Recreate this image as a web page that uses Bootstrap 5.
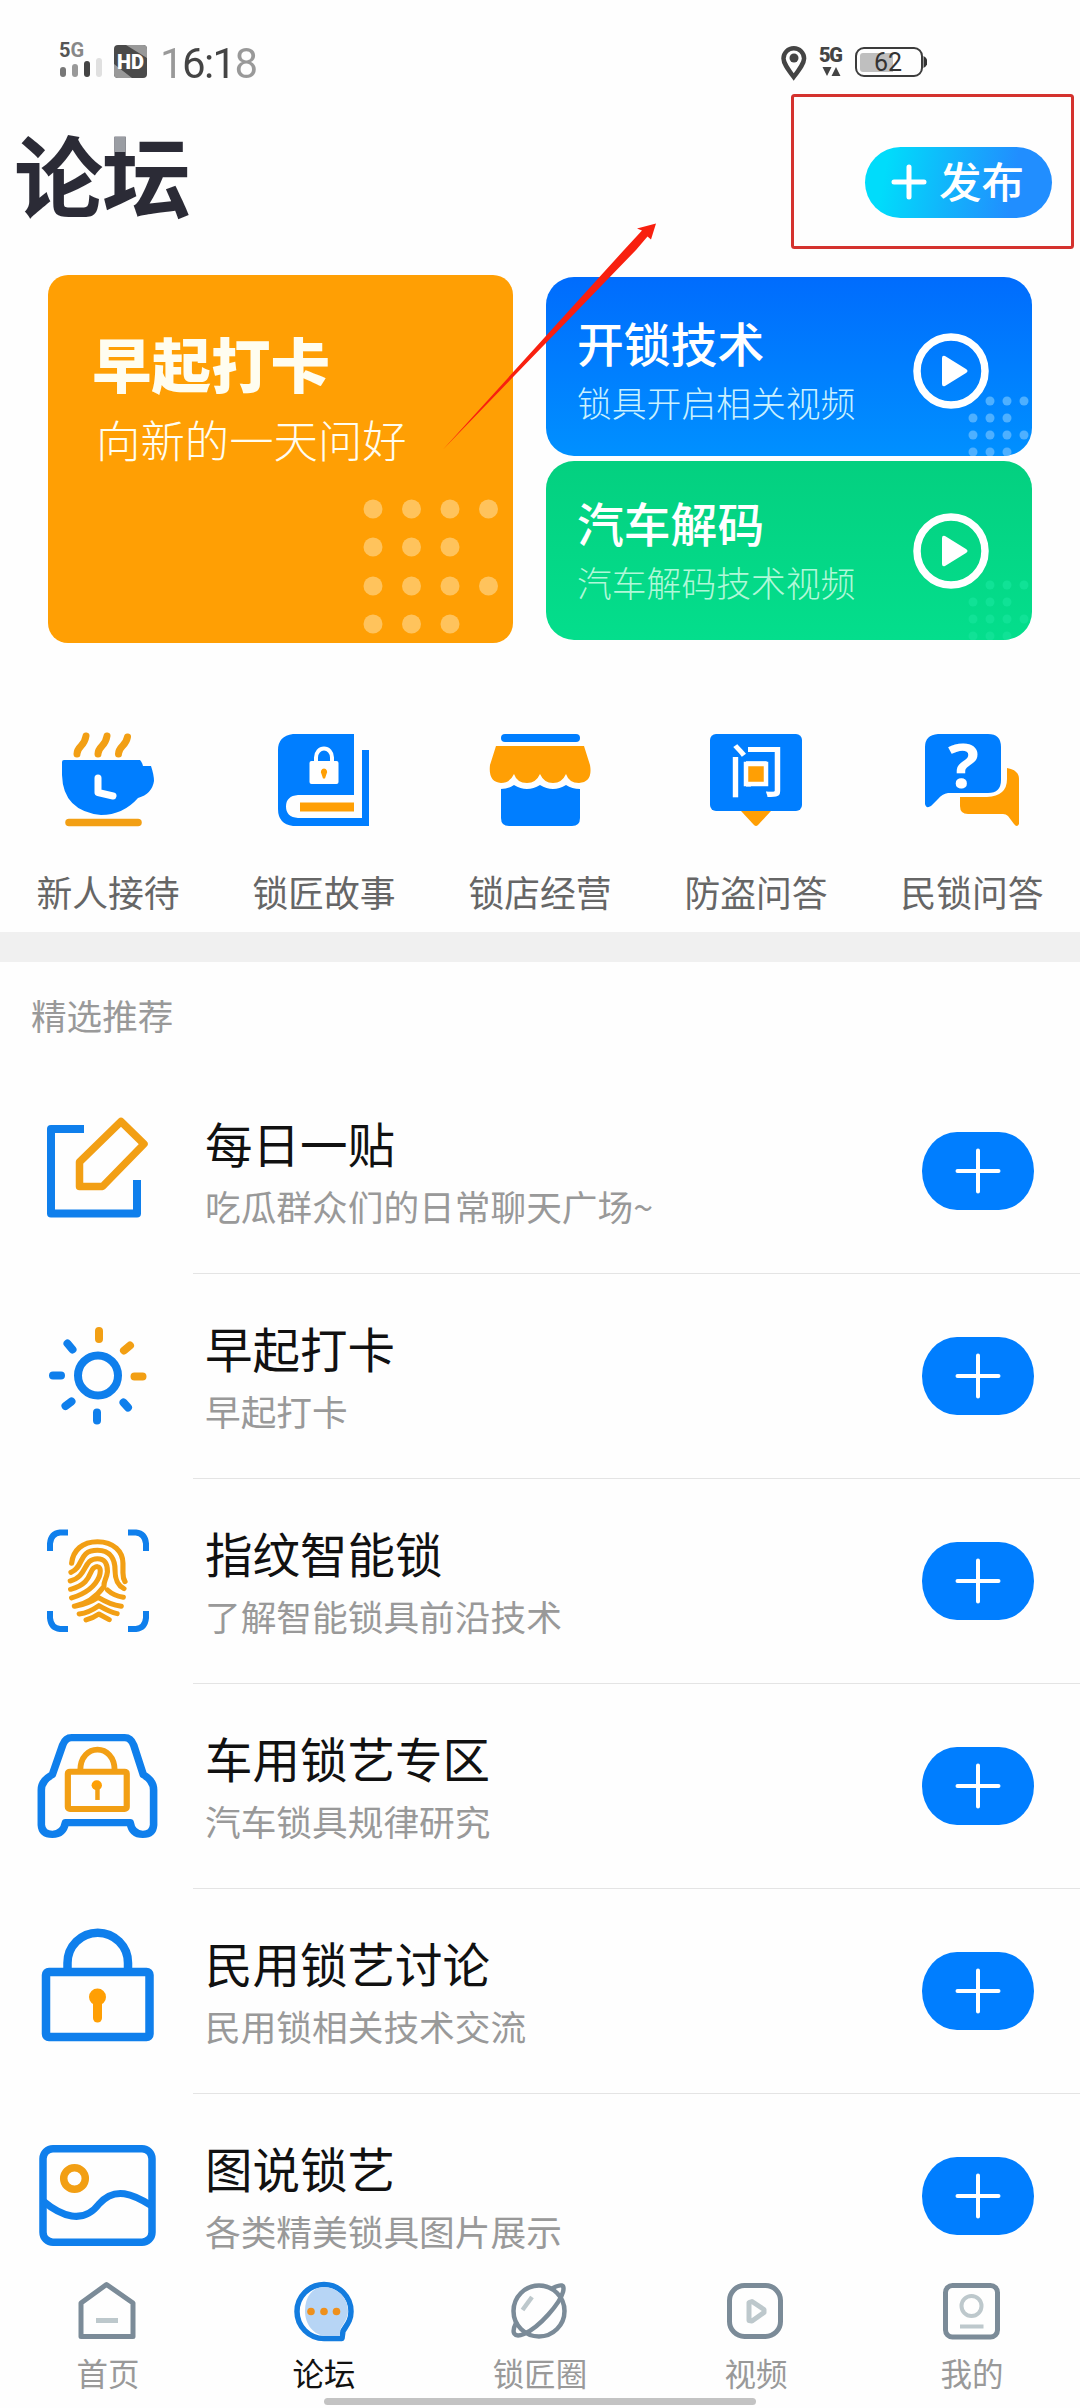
<!DOCTYPE html>
<html lang="zh-CN">
<head>
<meta charset="utf-8">
<meta name="viewport" content="width=device-width, initial-scale=1">
<title>论坛</title>
<link href="https://cdn.jsdelivr.net/npm/bootstrap@5.3.0/dist/css/bootstrap.min.css" rel="stylesheet">
<style>
  :root { --brand: #007eff; --sun: #ff9f04; }
  body { background: #fefefe; font-family: "Noto Sans CJK SC", "Noto Sans", sans-serif; color: #111; }
  svg { display: block; flex: none; }
  .screen { width: 1080px; height: 2408px; }
  .statusbar { height: 124px; padding: 0 153px 0 52px; font-family: Roboto, sans-serif; }
  .clock { font-size: 42px; line-height: 50px; letter-spacing: -1.6px; margin-left: 8px; padding: 3px 3px 0 0;
    background: linear-gradient(90deg, #999 0 20px, #444 20px 68px, #999 74px); -webkit-background-clip: text; background-clip: text; color: transparent; }
  .topbar { height: 115px; padding: 0 28px 0 14px; }
  .topbar h1 { font-size: 89px; line-height: 110px; font-weight: 700; letter-spacing: -1px; padding-bottom: 18px;
    background: linear-gradient(#9a9da3, #9a9da3) 100px 0/14px 34px no-repeat, #2b2b36; -webkit-background-clip: text; background-clip: text; color: transparent; }
  .publish { width: 187px; height: 71px; font-size: 42.5px; line-height: 60px; font-weight: 500; color: #fff; padding: 0 0 0 26px; margin-top: 1px;
    background: linear-gradient(100deg, #00dcfb 12%, #12b4fb 45%, #218eff 78%); }
  .promo { margin: 36px 48px 0; height: 368px; }
  .promo-day { width: 465px; border-radius: 20px; background: var(--sun); padding: 51px 0 0 44px; color: #fffdf0; }
  .promo-day h2 { font-size: 59.5px; line-height: 72px; font-weight: 900; }
  .promo-day p { font-size: 44.4px; line-height: 60px; font-weight: 300; padding: 7px 0 0 4px; }
  .promo-side { width: 486px; padding: 2px 0 3px; }
  .promo-video { height: 179px; border-radius: 28px; padding: 0 43px 0 31px; color: #fff; }
  .promo-video h2 { font-size: 46.8px; line-height: 60px; font-weight: 500; padding-top: 6px; }
  .promo-video p { font-size: 34.8px; line-height: 50px; font-weight: 300; color: #c9f1ff; margin-top: 5px; }
  .promo-open { background: linear-gradient(#006cfd, #0090ff); }
  .promo-car { background: linear-gradient(#04d080, #04de8c); }
  .promo-car h2 { padding: 0; }
  .promo-car p { color: #b0f8d8; padding-bottom: 3px; }
  .shortcuts { height: 289px; padding-top: 77px; }
  .shortcuts span { font-size: 35.8px; line-height: 50px; color: #666; margin-top: 25px; }
  .divide { height: 30px; background: #f0f0f0; }
  .section-name { height: 107px; padding: 0 0 2px 31px; font-size: 35.6px; color: #999; }
  .boards { height: 1187px; }
  .board { height: 205px; }
  .board-main { border-bottom: 1px solid #e4e4e4; padding: 0 46px 0 12px; }
  .board h3 { font-size: 47.5px; line-height: 60px; font-weight: 400; margin: 2px 0 8px; }
  .board p { font-size: 35.7px; line-height: 50px; color: #999; }
  .follow { width: 112px; height: 78px; border-radius: 35px / 39px; background: var(--brand); }
  .tabs { height: 152px; padding-top: 18px; background: #fefefe; }
  .tabs a { width: 216px; font-size: 31.5px; line-height: 44px; color: #999; }
  .tabs a.active { color: #111; }
  .tabs span { margin-top: 2px; }
  .homebar { width: 432px; height: 7px; left: 324px; bottom: 3px; background: #c3c3c3; }
  .fo { fill: var(--sun); } .fb { fill: var(--brand); } .fw { fill: #fff; }
  .so { stroke: #f29f14; fill: none; } .sb { stroke: #0f7fec; fill: none; }
  .sw { stroke: #fff; fill: none; } .sg { stroke: #7b8b98; fill: none; } .sl { stroke: #bdc8cc; fill: none; }
  .rd { stroke-linecap: round; stroke-linejoin: round; }
</style>
<script src="https://cdn.jsdelivr.net/npm/bootstrap@5.3.0/dist/js/bootstrap.bundle.min.js"></script>
</head>
<body>
<div class="screen position-relative overflow-hidden d-flex flex-column">

  <div class="statusbar d-flex align-items-center justify-content-between">
    <div class="d-flex align-items-center">
      <svg width="100" height="64" viewBox="52 29 100 64">
        <text x="59" y="56" font-size="20" font-weight="700" fill="#555">5<tspan fill="#888">G</tspan></text>
        <g stroke-width="6" stroke-linecap="round"><path d="M63 69v4" stroke="#777"/><path d="M75 66v7" stroke="#999"/><path d="M87 63v10" stroke="#444"/><path d="M99 60v13" stroke="#e0e0e0"/></g>
        <rect x="114" y="44" width="33" height="33" rx="4" fill="#4a4a4a"/>
        <path d="M126 44h17q4 0 4 4v9zM114 63l18 14h-14q-4 0-4-4z" fill="#999"/>
        <text x="117" y="68" font-size="20" font-weight="900" fill="#fff" textLength="27" lengthAdjust="spacingAndGlyphs">HD</text>
      </svg>
      <span class="clock">16:18</span>
    </div>
    <svg width="147" height="40" viewBox="780 41 147 40">
      <path d="M793.700 76C787 67 783.500 62 783.500 57.500a10.300 10.300 0 0 1 20.600 0C804 62 800.500 67 793.700 76z" fill="none" stroke="#444" stroke-width="4.500"/>
      <circle cx="794" cy="57" r="4.500" fill="#444"/>
      <text x="819" y="61" font-size="20" font-weight="900" fill="#444" textLength="24">5G</text>
      <path d="M822.500 66h9l-4.500 9zM831.500 75h9l-4.500-9z" fill="#444"/>
      <rect x="856" y="47" width="66" height="28" rx="8" fill="none" stroke="#3c3c3c" stroke-width="2"/>
      <path d="M863 52h30v19h-30q-3 0-3-3v-13q0-3 3-3z" fill="#bfbfbf"/>
      <path d="M923.500 55q4 2 4 6t-4 6z" fill="#333"/>
      <text x="874" y="70" font-size="25" fill="#333">62</text>
    </svg>
  </div>

  <header class="topbar d-flex align-items-center justify-content-between">
    <h1 class="m-0">论坛</h1>
    <button type="button" class="publish btn rounded-pill border-0 d-flex align-items-center">
      <svg width="36" height="36" viewBox="0 0 36 36"><path class="sw" stroke-width="5" stroke-linecap="round" d="M18 3v30M3 18h30"/></svg>
      <span class="ms-2 ps-1 pb-1">发布</span>
    </button>
  </header>

  <section class="promo d-flex justify-content-between">
    <div class="promo-day position-relative">
      <h2 class="m-0">早起打卡</h2>
      <p class="m-0 mt-1">向新的一天问好</p>
      <svg class="position-absolute bottom-0 end-0" width="153" height="150" viewBox="360 493 153 150">
        <g fill="#ffc35c"><circle cx="373" cy="509" r="9.500"/><circle cx="411.500" cy="509" r="9.500"/><circle cx="450" cy="509" r="9.500"/><circle cx="488.500" cy="509" r="9.500"/><circle cx="373" cy="547" r="9.500"/><circle cx="411.500" cy="547" r="9.500"/><circle cx="450" cy="547" r="9.500"/><circle cx="373" cy="586" r="9.500"/><circle cx="411.500" cy="586" r="9.500"/><circle cx="450" cy="586" r="9.500"/><circle cx="488.500" cy="586" r="9.500"/><circle cx="373" cy="624" r="9.500"/><circle cx="411.500" cy="624" r="9.500"/><circle cx="450" cy="624" r="9.500"/></g>
      </svg>
    </div>
    <div class="promo-side d-flex flex-column justify-content-between">
      <div class="promo-video promo-open position-relative overflow-hidden d-flex align-items-center justify-content-between">
        <div><h2 class="m-0">开锁技术</h2><p class="mb-0">锁具开启相关视频</p></div>
        <svg width="76" height="76" viewBox="0 0 76 76" class="mt-2"><circle class="sw" cx="38" cy="38" r="34" stroke-width="7.500"/><path class="fw" d="M29 25q0-3 3-2l21 13q3 2 0 4L32 53q-3 1-3-2z"/></svg>
        <svg class="position-absolute bottom-0 end-0" width="70" height="65" viewBox="962 391 70 65"><g fill="#4eb0ff"><circle cx="990" cy="401" r="4.500"/><circle cx="1007" cy="401" r="4.500"/><circle cx="1024" cy="401" r="4.500"/><circle cx="973" cy="418" r="4.500"/><circle cx="990" cy="418" r="4.500"/><circle cx="1007" cy="418" r="4.500"/><circle cx="973" cy="435" r="4.500"/><circle cx="990" cy="435" r="4.500"/><circle cx="1007" cy="435" r="4.500"/><circle cx="1024" cy="435" r="4.500"/><circle cx="973" cy="452" r="4.500"/><circle cx="990" cy="452" r="4.500"/><circle cx="1007" cy="452" r="4.500"/></g></svg>
      </div>
      <div class="promo-video promo-car position-relative overflow-hidden d-flex align-items-center justify-content-between">
        <div><h2 class="m-0">汽车解码</h2><p class="mb-0">汽车解码技术视频</p></div>
        <svg width="76" height="76" viewBox="0 0 76 76"><circle class="sw" cx="38" cy="38" r="34" stroke-width="7.500"/><path class="fw" d="M29 25q0-3 3-2l21 13q3 2 0 4L32 53q-3 1-3-2z"/></svg>
        <svg class="position-absolute bottom-0 end-0" width="70" height="65" viewBox="962 391 70 65"><g fill="#10e296"><circle cx="990" cy="401" r="4.500"/><circle cx="1007" cy="401" r="4.500"/><circle cx="1024" cy="401" r="4.500"/><circle cx="973" cy="418" r="4.500"/><circle cx="990" cy="418" r="4.500"/><circle cx="1007" cy="418" r="4.500"/><circle cx="973" cy="435" r="4.500"/><circle cx="990" cy="435" r="4.500"/><circle cx="1007" cy="435" r="4.500"/><circle cx="1024" cy="435" r="4.500"/><circle cx="973" cy="452" r="4.500"/><circle cx="990" cy="452" r="4.500"/><circle cx="1007" cy="452" r="4.500"/></g></svg>
      </div>
    </div>
  </section>

  <section class="shortcuts row g-0 row-cols-5">
    <div class="col d-flex flex-column align-items-center">
      <svg width="120" height="122" viewBox="48 720 120 122">
        <path class="so rd" stroke-width="7" d="M77 754q0-4 4-8t5-10M98 754q0-4 4-8t5-10M118.500 754q0-4 4-8t5-9"/>
        <path class="fb" d="M64 760h76q2 2 3 6h8q3 9 3 15-2 13-16 17-15 17-37 17-38-4-39-40v-13q0-2 2-2z"/>
        <path class="sw rd" stroke-width="7" d="M98 778v14.500l15 3.500"/>
        <path class="so rd" stroke-width="7.500" d="M69 822.500h69"/>
      </svg><span class="mt-4">新人接待</span>
    </div>
    <div class="col d-flex flex-column align-items-center">
      <svg width="120" height="122" viewBox="264 720 120 122">
        <path class="fb" d="M293 734h61v61h-56q-12 1-12 11.500T298 818h64v-68h7v76h-76q-15-2-15-17v-59q0-14 15-16z"/>
        <path class="fo" d="M300 802.500h54v9h-54z"/>
        <rect class="fw" x="309.500" y="761" width="29" height="23" rx="2"/>
        <path class="sw" stroke-width="4" d="M316 762v-4.500a8 9 0 0 1 16 0v4.500"/>
        <path class="fo" d="M324 768.500a3.500 3.500 0 0 1 2.500 5.500l-1.500 4.500h-2l-1.500-4.500a3.500 3.500 0 0 1 2.500-5.500z"/>
      </svg><span class="mt-4">锁匠故事</span>
    </div>
    <div class="col d-flex flex-column align-items-center">
      <svg width="120" height="122" viewBox="480 720 120 122">
        <path class="fb" d="M505 734h71a4 4 0 0 1 0 8h-71a4 4 0 0 1 0-8z"/>
        <path class="fo" d="M496 746h88l6 19q3 17-11 18-10 0-13-9-4 9-13 9-9 0-13-9-4 9-13 9-10 0-13-9-4 9-13 9-13-1-11-18z"/>
        <path class="fb" d="M501 789q7 0 13-4 13 8 26 0 13 8 26 0 6 4 14 4v29q0 8-8 8h-63q-8 0-8-8z"/>
      </svg><span class="mt-4">锁店经营</span>
    </div>
    <div class="col d-flex flex-column align-items-center">
      <svg width="120" height="122" viewBox="696 720 120 122">
        <rect class="fb" x="710" y="734" width="92" height="77" rx="6"/>
        <path class="fo" d="M741 811h30l-13 14q-2 2-4 0z"/>
        <text class="fw" x="728" y="792" font-size="57" font-weight="500">问</text>
        <path d="M746 764h20v20h-20z" fill="#ff9f04" stroke="#fff" stroke-width="4.500"/>
      </svg><span class="mt-4">防盗问答</span>
    </div>
    <div class="col d-flex flex-column align-items-center">
      <svg width="120" height="122" viewBox="912 720 120 122">
        <path class="fb" d="M938 734h50q13 0 13 13v33q0 13-13 13h-40q-6 1-10 6l-7 7q-5 3-6-2v-57q0-12 13-13z"/>
        <path class="fo" d="M1007 768q12 2 12 11v45q-2 4-5 0l-6-8q-2-2-5-2h-35q-8 0-8-8v-9h27q20-1 20-18z"/>
        <text class="fw" x="948" y="788" font-size="60" font-weight="700" font-family="Open Sans, sans-serif" textLength="31" lengthAdjust="spacingAndGlyphs">?</text>
      </svg><span class="mt-4">民锁问答</span>
    </div>
  </section>

  <div class="divide"></div>
  <div class="section-name d-flex align-items-center">精选推荐</div>

  <main class="boards overflow-hidden">
    <div class="board d-flex">
      <svg width="193" height="205" viewBox="0 1069 193 205">
        <path class="sb" stroke-width="8" stroke-linejoin="round" d="M84 1129H51v84.500h86V1180"/>
        <path class="so" stroke-width="7.500" stroke-linejoin="round" d="M79.500 1186.500V1162l41.500-40.500 23 22.500-41.500 42.500z"/>
      </svg>
      <div class="board-main flex-grow-1 d-flex align-items-center justify-content-between">
        <div><h3>每日一贴</h3><p class="m-0">吃瓜群众们的日常聊天广场~</p></div>
        <button type="button" class="follow btn border-0 p-0 d-flex align-items-center justify-content-center"><svg width="46" height="46" viewBox="0 0 46 46"><path class="sw rd" stroke-width="4" d="M23 2.500v41M2.500 23h41"/></svg></button>
      </div>
    </div>
    <div class="board d-flex">
      <svg width="193" height="205" viewBox="0 1274 193 205">
        <circle class="sb" cx="98" cy="1375.500" r="20" stroke-width="8"/>
        <path class="so rd" stroke-width="8" d="M99 1331v8M124 1350.500l6-5M134.500 1376.500h8"/>
        <path class="sb rd" stroke-width="8" d="M123.500 1402.500l4.500 5M97 1412.500v8M65.500 1406l6-4.500M53 1375.500h8M67.500 1343.500l5 6"/>
      </svg>
      <div class="board-main flex-grow-1 d-flex align-items-center justify-content-between">
        <div><h3>早起打卡</h3><p class="m-0">早起打卡</p></div>
        <button type="button" class="follow btn border-0 p-0 d-flex align-items-center justify-content-center"><svg width="46" height="46" viewBox="0 0 46 46"><path class="sw rd" stroke-width="4" d="M23 2.500v41M2.500 23h41"/></svg></button>
      </div>
    </div>
    <div class="board d-flex">
      <svg width="193" height="205" viewBox="0 1479 193 205">
        <path class="sb" stroke-width="6" d="M68 1532.500h-8q-9 1-10 11v7.500M128 1532.500h8q9 1 10 11v7.500M50 1611v7q1 10 10 11h8M146 1611v7q-1 10-10 11h-8"/>
        <g transform="translate(0 1480) scale(.3444 .3333)" class="so rd" stroke-width="15">
          <path d="M208 250C212 210 240 185 283 185 330 185 357 215 357 250V278Q357 295 363 305M206 277C245 262 225 211 283 211 322 211 334 240 334 270 334 305 345 318 360 326M204 303C255 290 240 236 283 236 308 236 312 255 312 275 310 295 300 305 302 318M205 328C265 312 258 275 272 264 290 252 295 268 288 290 278 315 258 338 208 354M312 330Q330 347 358 352M216 379C250 372 280 350 300 322M217 379Q255 372 285 352 320 374 352 379M230 402Q258 398 287 377 320 397 340 401M250 420Q272 413 287 402L317 419"/>
        </g>
      </svg>
      <div class="board-main flex-grow-1 d-flex align-items-center justify-content-between">
        <div><h3>指纹智能锁</h3><p class="m-0">了解智能锁具前沿技术</p></div>
        <button type="button" class="follow btn border-0 p-0 d-flex align-items-center justify-content-center"><svg width="46" height="46" viewBox="0 0 46 46"><path class="sw rd" stroke-width="4" d="M23 2.500v41M2.500 23h41"/></svg></button>
      </div>
    </div>
    <div class="board d-flex">
      <svg width="193" height="205" viewBox="0 1684 193 205">
        <g transform="translate(0 1480) scale(.3444 .3333)">
          <path class="sb" stroke-width="22" stroke-linejoin="round" d="M208 773H362Q380 773 388 795L416 884Q446 902 446 930V1035Q444 1063 415 1063 383 1063 378 1028H190Q184 1063 152 1063 122 1063 120 1035V930Q120 902 152 884L182 795Q190 773 208 773Z"/>
          <rect class="so" stroke-width="18" x="197" y="875" width="171" height="112" rx="6"/>
          <path class="so" stroke-width="17" d="M233 872C233 788 333 788 333 872"/>
          <circle class="fo" cx="281" cy="916" r="15"/><path class="so" stroke-width="13" d="M283 916v44"/>
        </g>
      </svg>
      <div class="board-main flex-grow-1 d-flex align-items-center justify-content-between">
        <div><h3>车用锁艺专区</h3><p class="m-0">汽车锁具规律研究</p></div>
        <button type="button" class="follow btn border-0 p-0 d-flex align-items-center justify-content-center"><svg width="46" height="46" viewBox="0 0 46 46"><path class="sw rd" stroke-width="4" d="M23 2.500v41M2.500 23h41"/></svg></button>
      </div>
    </div>
    <div class="board d-flex">
      <svg width="193" height="205" viewBox="0 1889 193 205">
        <rect class="sb" stroke-width="8.500" x="46" y="1972" width="103.500" height="65" rx="3"/>
        <path class="sb" stroke-width="8.500" d="M67.500 1970v-7a30.200 30.200 0 0 1 60.500 0v7"/>
        <circle class="fo" cx="97.500" cy="1997" r="8.500"/><path stroke="#ff9f04" stroke-width="9" stroke-linecap="round" d="M97.500 1998v20"/>
      </svg>
      <div class="board-main flex-grow-1 d-flex align-items-center justify-content-between">
        <div><h3>民用锁艺讨论</h3><p class="m-0">民用锁相关技术交流</p></div>
        <button type="button" class="follow btn border-0 p-0 d-flex align-items-center justify-content-center"><svg width="46" height="46" viewBox="0 0 46 46"><path class="sw rd" stroke-width="4" d="M23 2.500v41M2.500 23h41"/></svg></button>
      </div>
    </div>
    <div class="board d-flex">
      <svg width="193" height="205" viewBox="0 2094 193 205">
        <rect class="sb" stroke-width="7.500" x="43" y="2148.700" width="109" height="93.500" rx="10"/>
        <circle class="so" stroke-width="7.500" cx="74.500" cy="2178.500" r="10.800"/>
        <path class="sb" stroke-width="7" d="M43 2201c18 15 40 24 56 3 16-18 34-10 53 2"/>
      </svg>
      <div class="board-main flex-grow-1 d-flex align-items-center justify-content-between">
        <div><h3>图说锁艺</h3><p class="m-0">各类精美锁具图片展示</p></div>
        <button type="button" class="follow btn border-0 p-0 d-flex align-items-center justify-content-center"><svg width="46" height="46" viewBox="0 0 46 46"><path class="sw rd" stroke-width="4" d="M23 2.500v41M2.500 23h41"/></svg></button>
      </div>
    </div>
  </main>

  <nav class="tabs d-flex position-relative">
    <a class="d-flex flex-column align-items-center text-decoration-none" href="#">
      <svg width="74" height="74" viewBox="71 2274 74 74"><path class="sg" stroke-width="5" stroke-linejoin="round" d="M81 2303l25.500-18.500L133 2303v33.500H81z"/><path class="sl" stroke-width="5" d="M96 2320.500h22"/></svg><span>首页</span></a>
    <a class="active d-flex flex-column align-items-center text-decoration-none" href="#">
      <svg width="74" height="74" viewBox="287 2274 74 74">
        <path d="M342 2338.500h-18a27 27 0 1 1 27-27c0 9-4 13-8 19.500z" fill="#fff" stroke="#137cdf" stroke-width="5.500" stroke-linejoin="round"/>
        <path d="M340 2336h-14c-13-1-21-12-21-25 0-15 8-23 17-24a24 24 0 0 1 26 24c0 8-5 13-8 19z" fill="#b7d5f5"/>
        <g fill="#ee901c"><circle cx="311" cy="2311.500" r="3.800"/><circle cx="324" cy="2311.500" r="3.800"/><circle cx="336.500" cy="2311.500" r="3.800"/></g></svg><span>论坛</span></a>
    <a class="d-flex flex-column align-items-center text-decoration-none" href="#">
      <svg width="74" height="74" viewBox="504 2274 74 74"><circle class="sg" cx="540" cy="2311" r="25.500" stroke-width="4.500"/><path class="sg rd" stroke-width="4.500" d="M517 2323c-5 10-2 15 8 11 16-7 36-31 39-42 2-8-2-8-10-4"/><path class="sl" stroke-width="4.500" d="M523.500 2310l9.500-13"/></svg><span>锁匠圈</span></a>
    <a class="d-flex flex-column align-items-center text-decoration-none" href="#">
      <svg width="74" height="74" viewBox="719 2274 74 74"><rect class="sg" stroke-width="5" x="729.500" y="2285.500" width="51" height="51" rx="15"/><path class="sl" stroke-width="5" stroke-linejoin="round" d="M749 2302.500v18l3 .5 12-8.500v-3l-12-8z"/></svg><span>视频</span></a>
    <a class="d-flex flex-column align-items-center text-decoration-none" href="#">
      <svg width="74" height="74" viewBox="935 2274 74 74"><rect class="sg" stroke-width="5" x="945.500" y="2285.500" width="52" height="51.500" rx="7"/><circle class="sl" stroke-width="4" cx="971.500" cy="2306" r="10"/><path class="sl" stroke-width="4" d="M960 2326.500h23.500"/></svg><span>我的</span></a>
    <div class="homebar position-absolute rounded-pill"></div>
  </nav>

  <!-- Red callout: frame round the publish button and the arrow that leads to it -->
  <svg class="position-absolute top-0 start-0 pe-none" width="1080" height="470" viewBox="0 0 1080 470">
    <rect x="792.500" y="95.500" width="280" height="152" rx="2" fill="none" stroke="#d4322e" stroke-width="3"/>
    <path d="M443 449.500L624 250l18-19.500-5-2 19-5-5 16-3.500-3L636 250z" fill="#f8200f"/>
  </svg>
</div>
</body>
</html>
